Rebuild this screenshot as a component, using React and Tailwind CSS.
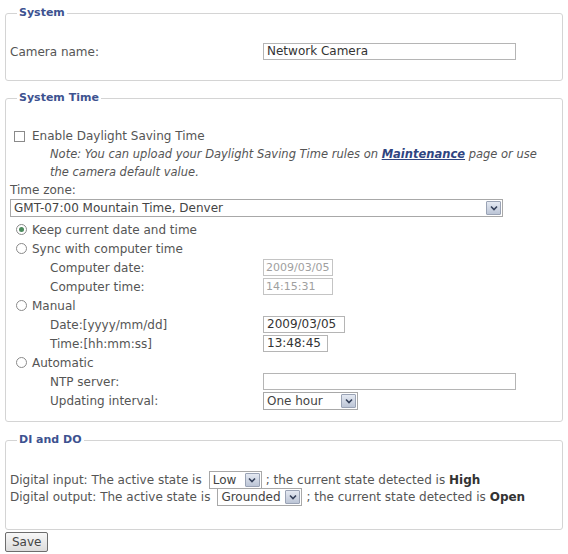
import React from 'react';

const Arrow = () => (
  <span className="flex items-center justify-center w-[15px] h-[14px] border border-[#9aa3b5] bg-gradient-to-b from-[#e4e9f2] to-[#bcc5d6] rounded-[1px]">
    <svg width="8" height="6" viewBox="0 0 8 6">
      <path d="M1 1.5 L4 4.5 L7 1.5" fill="none" stroke="#34405a" strokeWidth="1.6" />
    </svg>
  </span>
);

const FakeSelect = ({ value, width, extra = '' }) => (
  <div className={`flex items-center justify-between h-[18px] border border-[#a8a8a8] bg-white pl-[3px] pr-[1px] ${width} ${extra}`}>
    <span className="text-[#444] leading-[16px]">{value}</span>
    <Arrow />
  </div>
);

const Radio = ({ checked, label }) => (
  <div className="flex items-center h-[19px] pl-[6px]">
    <span className="flex items-center justify-center w-[11px] h-[11px] rounded-full border border-[#8a8a8a] bg-white">
      {checked && <span className="w-[5px] h-[5px] rounded-full bg-[#4b8a5c]" />}
    </span>
    <span className="ml-[5px]">{label}</span>
  </div>
);

const Row = ({ label, children }) => (
  <div className="flex items-center h-[19px] pl-[40px]">
    <span className="w-[213px]">{label}</span>
    {children}
  </div>
);

const TextBox = ({ value, width }) => (
  <div className={`h-[17px] border border-[#b5b5b5] bg-white px-[3px] leading-[15px] text-[#333] ${width}`}>
    {value}
  </div>
);

const DisabledBox = ({ value }) => (
  <div className="h-[17px] w-[70px] border border-[#c4c4c4] bg-white px-[2px] leading-[15px] text-[11px] text-[#a0a0a0]">
    {value}
  </div>
);

const Legend = ({ children }) => (
  <legend className="ml-[7px] px-[2px] leading-[14px] text-[11px] font-bold text-[#3d5290]">{children}</legend>
);

export default function App() {
  return (
    <div className="w-[568px] h-[554px] bg-white px-[5px] pt-[6px] font-['DejaVu_Sans',sans-serif] text-[12px] leading-[16px] text-[#555]">
      <fieldset className="border border-[#d4d4d4] rounded-[3px] px-[4px] pt-[22px] pb-[19px]">
        <Legend>System</Legend>
        <div className="flex items-center h-[19px]">
          <span className="w-[253px]">Camera name:</span>
          <TextBox value="Network Camera" width="w-[253px]" />
        </div>
      </fieldset>

      <fieldset className="mt-[10px] border border-[#d4d4d4] rounded-[3px] px-[4px] pt-[22px] pb-[11px]">
        <Legend>System Time</Legend>
        <div className="flex items-center h-[18px] pl-[4px]">
          <span className="w-[11px] h-[11px] border border-[#8a8a8a] bg-white" />
          <span className="ml-[7px]">Enable Daylight Saving Time</span>
        </div>
        <div className="pl-[40px] italic text-[11.5px] leading-[18px]">
          Note: You can upload your Daylight Saving Time rules on{' '}
          <span className="font-bold underline text-[#2f4581]">Maintenance</span> page or use<br />
          the camera default value.
        </div>
        <div className="leading-[18px]">Time zone:</div>
        <FakeSelect value="GMT-07:00 Mountain Time, Denver" width="w-[493px]" />
        <div className="mt-[3px]">
          <Radio checked label="Keep current date and time" />
          <Radio label="Sync with computer time" />
          <Row label="Computer date:"><DisabledBox value="2009/03/05" /></Row>
          <Row label="Computer time:"><DisabledBox value="14:15:31" /></Row>
          <Radio label="Manual" />
          <Row label="Date:[yyyy/mm/dd]"><TextBox value="2009/03/05" width="w-[82px]" /></Row>
          <Row label="Time:[hh:mm:ss]"><TextBox value="13:48:45" width="w-[65px]" /></Row>
          <Radio label="Automatic" />
          <Row label="NTP server:"><TextBox value="" width="w-[253px]" /></Row>
          <Row label="Updating interval:"><FakeSelect value="One hour" width="w-[95px]" /></Row>
        </div>
      </fieldset>

      <fieldset className="mt-[11px] border border-[#d4d4d4] rounded-[3px] px-[4px] pt-[24px] pb-[24px]">
        <Legend>DI and DO</Legend>
        <div className="flex items-center h-[17px]">
          <span>Digital input: The active state is</span>
          <FakeSelect value="Low" width="w-[53px]" extra="ml-[7px] mr-[4px]" />
          <span>; the current state detected is <b className="text-[#333]">High</b></span>
        </div>
        <div className="flex items-center h-[17px]">
          <span>Digital output: The active state is</span>
          <FakeSelect value="Grounded" width="w-[85px]" extra="ml-[7px] mr-[4px]" />
          <span>; the current state detected is <b className="text-[#333]">Open</b></span>
        </div>
      </fieldset>

      <button className="mt-[2px] h-[20px] px-[6px] border border-[#6d6d6d] rounded-[2px] bg-gradient-to-b from-[#f8f8f8] to-[#dcdcdc] text-[#444] text-[12px] leading-[16px]">
        Save
      </button>
    </div>
  );
}
